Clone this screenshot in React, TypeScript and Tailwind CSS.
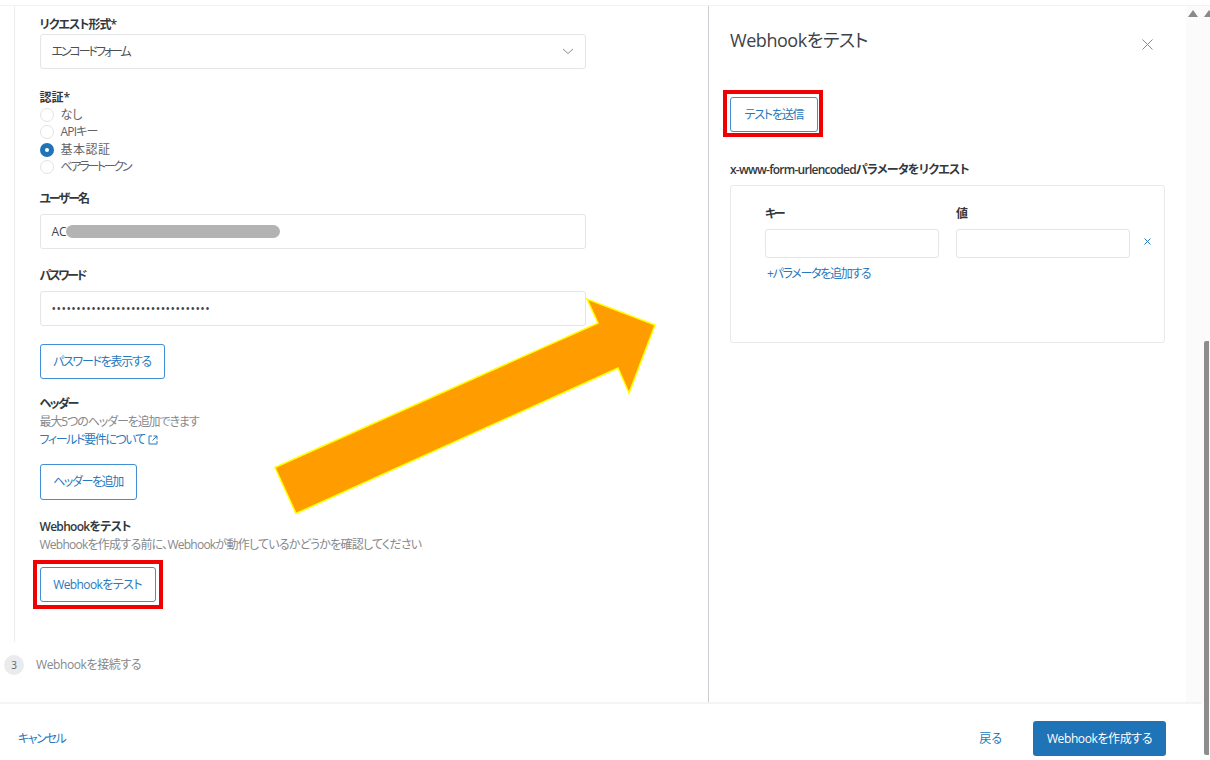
const jp = "font-['Open_Sans','Noto_Sans_CJK_JP',sans-serif] [font-feature-settings:'palt']"

function Radio({ label, checked, className }: { label: string; checked?: boolean; className?: string }) {
  return (
    <div className="flex h-[17.5px] items-center gap-[7px]">
      {checked ? (
        <span className="flex size-[14px] items-center justify-center rounded-full bg-[#1f73b7]">
          <span className="size-[4px] rounded-full bg-white" />
        </span>
      ) : (
        <span className="size-[14px] rounded-full border border-[#e3e3e3] bg-white" />
      )}
      <span className={`text-[12px] text-[#5f6368] ${className ?? ""}`}>{label}</span>
    </div>
  )
}

function OutlineButton({ children, className }: { children: React.ReactNode; className: string }) {
  return (
    <button className={`flex items-center justify-center rounded-[3px] border border-[#3f8fd2] bg-white text-[12px] text-[#2a78bd] ${className}`}>
      {children}
    </button>
  )
}

function Field({ children }: { children?: React.ReactNode }) {
  return (
    <div className="mt-[6px] flex h-[35px] items-center rounded-[3px] border border-[#e4e5e7] bg-white pl-[11px] text-[12px] text-[#3f4448]">
      {children}
    </div>
  )
}

function Label({ children, className }: { children: React.ReactNode; className?: string }) {
  return <div className={`text-[12px] leading-[18px] font-semibold text-[#33383c] ${className ?? ""}`}>{children}</div>
}

function App() {
  return (
    <div className={`relative flex h-[760px] w-[1210px] flex-col overflow-hidden bg-white ${jp}`}>
      <div className="h-[6px] shrink-0 border-b border-[#f2f2f3] bg-white" />

      <div className="flex min-h-0 flex-1">
        <main className="flex w-[708px] shrink-0 flex-col">
          <div className="ml-[13.5px] h-[636px] w-[526px] border-l border-[#ececee] pl-[25px] pt-[10px]">
            <Label className="tracking-[-1px]">リクエスト形式*</Label>
            <div className="flex h-[35px] w-[546px] items-center justify-between rounded-[3px] border border-[#e4e5e7] px-[11px] text-[12px] text-[#4a4f54]">
              <span className="tracking-[-2.1px]">エンコードフォーム</span>
              <svg width="12" height="7" viewBox="0 0 12 7" fill="none" stroke="#868b90" strokeWidth="1">
                <path d="M1 1l5 4.5L11 1" />
              </svg>
            </div>

            <div className="mt-[20px]"><Label>認証*</Label></div>
            <div className="mt-[-1px]">
              <Radio label="なし" />
              <Radio label="APIキー" className="tracking-[-0.8px]" />
              <Radio checked label="基本認証" className="tracking-[0.5px]" />
              <Radio label="ベアラートークン" className="tracking-[-2.3px]" />
            </div>

            <div className="mt-[14px]"><Label className="tracking-[-2px]">ユーザー名</Label></div>
            <div className="w-[546px]">
              <Field>
                AC
                <span className="ml-[-1px] h-[13px] w-[214px] rounded-full bg-[#b3b3b3]" />
              </Field>
            </div>

            <div className="mt-[18px]"><Label className="tracking-[-2.2px]">パスワード</Label></div>
            <div className="w-[546px]">
              <Field>
                <span className="tracking-[0.45px] text-[#3f4448]">••••••••••••••••••••••••••••••••</span>
              </Field>
            </div>

            <OutlineButton className="mt-[18px] h-[35px] w-[125px] tracking-[-1.3px]">パスワードを表示する</OutlineButton>

            <div className="mt-[16px]"><Label className="tracking-[-1.75px]">ヘッダー</Label></div>
            <div className="text-[12px] leading-[18px] tracking-[-1.1px] text-[#85898d]">最大5つのヘッダーを追加できます</div>
            <div className="flex items-center gap-[3px] text-[12px] leading-[18px] text-[#2a78bd]">
              <span className="tracking-[-1.4px]">フィールド要件について</span>
              <svg width="10" height="10" viewBox="0 0 10 10" fill="none" stroke="#2a78bd" strokeWidth="1">
                <path d="M4 1H1v8h8V6M5.5 1H9v3.5M9 1 4.5 5.5" />
              </svg>
            </div>

            <OutlineButton className="mt-[15px] h-[36px] w-[97px] tracking-[-1.4px]">ヘッダーを追加</OutlineButton>

            <div className="mt-[18px]"><Label className="tracking-[-0.7px]">Webhookをテスト</Label></div>
            <div className="whitespace-nowrap text-[12px] leading-[17px] tracking-[-0.75px] text-[#85898d]">Webhookを作成する前に、Webhookが動作しているかどうかを確認してください</div>

            <div className="-ml-[7px] mt-[7px] w-fit border-4 border-[#f00000] p-[3px]">
              <OutlineButton className="h-[35px] w-[116px] tracking-[-0.6px]">Webhookをテスト</OutlineButton>
            </div>
          </div>

          <div className="mt-[12px] flex h-[22px] items-center pl-[4px]">
            <span className="flex size-[20px] items-center justify-center rounded-full bg-[#e9ebed] text-[10px] text-[#60656a]">3</span>
            <span className="ml-[12px] text-[12px] tracking-[-0.4px] text-[#85898d]">Webhookを接続する</span>
          </div>
        </main>

        <aside className="flex w-[478px] shrink-0 flex-col border-l border-[#c9ccd0] pl-[21px]">
          <div className="flex h-[84px] items-start justify-between pr-[33px] pt-[21px]">
            <h2 className="text-[18px] leading-[27px] tracking-[-0.45px] text-[#3d4246]">Webhookをテスト</h2>
            <svg className="mt-[12px]" width="11" height="11" viewBox="0 0 11 11" stroke="#85898d" strokeWidth="1">
              <path d="M.5.5l10 10M10.5.5l-10 10" />
            </svg>
          </div>

          <div className="ml-[-7px] w-fit border-4 border-[#f00000] pb-[1px] pl-[3px] pr-[1px] pt-[3px]">
            <OutlineButton className="h-[35px] w-[88px] tracking-[-1.2px]">テストを送信</OutlineButton>
          </div>

          <div className="mt-[24px] text-[12px] leading-[18px] font-semibold tracking-[-0.75px] text-[#33383c]">x-www-form-urlencodedパラメータをリクエスト</div>

          <div className="mt-[6px] h-[158px] w-[435px] rounded-[3px] border border-[#e8e9eb] pl-[34px] pt-[19px]">
            <div className="flex gap-[17px]">
              <div className="w-[174px]">
                <Label className="tracking-[-2px]">キー</Label>
                <div className="mt-[6px] h-[29px] rounded-[3px] border border-[#e4e5e7]" />
              </div>
              <div className="w-[174px]">
                <Label>値</Label>
                <div className="mt-[6px] h-[29px] rounded-[3px] border border-[#e4e5e7]" />
              </div>
              <svg className="ml-[-3px] mt-[33px]" width="7" height="7" viewBox="0 0 7 7" stroke="#2a78bd" strokeWidth="1">
                <path d="M.5.5l6 6M6.5.5l-6 6" />
              </svg>
            </div>
            <div className="ml-[2px] mt-[7px] text-[12px] leading-[18px] tracking-[-1.3px] text-[#2a78bd]">+パラメータを追加する</div>
          </div>
        </aside>

        <div className="relative flex-1 bg-[#fbfbfb]">
          <svg className="absolute left-[2px] top-[4px]" width="10" height="7" viewBox="0 0 10 7" fill="#8a8a8a">
            <path d="M5 0l5 7H0z" />
          </svg>
          <svg className="absolute left-[18px] top-[4px]" width="6" height="7" viewBox="0 0 6 7" fill="#8a8a8a">
            <path d="M5 0l5 7H0z" />
          </svg>
        </div>
      </div>

      <footer className="flex h-[58px] w-[1202px] shrink-0 items-start justify-between border-t-2 border-[#f4f4f5] pl-[18px] pr-[36px] pt-[17px]">
        <span className="mt-[9px] text-[12px] tracking-[-1.4px] text-[#2a78bd]">キャンセル</span>
        <div className="flex items-center gap-[31px]">
          <span className="text-[12px] text-[#2a78bd]">戻る</span>
          <button className="h-[35px] w-[133px] rounded-[3px] bg-[#1f73b7] text-[12px] tracking-[-0.4px] text-white">Webhookを作成する</button>
        </div>
      </footer>

      <div className="absolute bottom-[5px] right-[1px] top-[341px] w-[5px] rounded-l-[2px] bg-[#8d8d8d]" />

      <svg className="pointer-events-none absolute left-0 top-0" width="1210" height="760">
        <polygon points="275,467.5 296,513.5 618,368 629,393 655,325 587,299 598,323" fill="#ff9c00" stroke="#ffff00" strokeWidth="1.5" />
      </svg>
    </div>
  )
}

export default App
